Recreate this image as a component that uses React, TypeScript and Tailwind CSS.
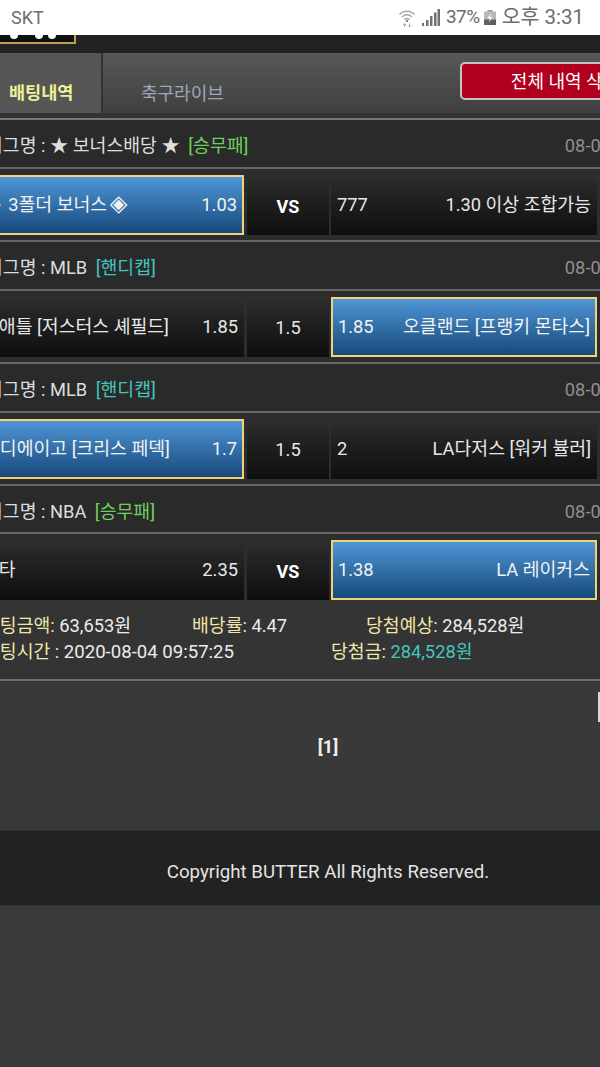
import type { ReactNode } from "react";

const FONT = "font-['Roboto','Noto_Sans_CJK_KR','Noto_Sans',sans-serif]";

function Wifi() {
  return (
    <svg width="18" height="20" viewBox="0 0 18 20" fill="none" stroke="#a8a8a8">
      <path d="M1.5 6.5C5.5 2 12.500 2 16.500 6.500" strokeWidth="1.500" />
      <path d="M4 9C6.800 6 11.200 6 14 9" strokeWidth="1.500" />
      <path d="M6.500 11.500C8 10 10 10 11.500 11.500" strokeWidth="1.500" />
      <circle cx="9" cy="13" r="1.200" fill="#8a8a8a" stroke="none" />
      <path d="M6.500 19V15.500M5 17l1.500-1.500L8 17M11.500 15.500V19M10 17.500l1.500 1.500 1.500-1.500" strokeWidth="1" />
    </svg>
  );
}
function Signal() {
  return (
    <svg width="18" height="17" viewBox="0 0 18 17" fill="#707070">
      <rect x="0" y="14" width="2" height="3" />
      <rect x="4" y="11" width="2.500" height="6" />
      <rect x="8" y="7" width="2.500" height="10" />
      <rect x="12" y="3.500" width="2.500" height="13.500" />
      <rect x="15.500" y="0" width="2.500" height="17" />
    </svg>
  );
}
function Battery() {
  return (
    <svg width="12" height="15" viewBox="0 0 12 15">
      <rect x="3.500" y="0" width="5" height="2" fill="#9a9a9a" />
      <rect x="0" y="1.500" width="12" height="13.500" fill="#b8b8b8" />
      <rect x="0" y="9.500" width="12" height="5.500" fill="#606060" />
      <path d="M7 3L3.500 8.500H6L5 12.500L8.500 7H6Z" fill="#ffffff" />
    </svg>
  );
}

function Cell({
  left,
  right,
  active,
  w,
}: {
  left: ReactNode;
  right: ReactNode;
  active?: boolean;
  w: string;
}) {
  return (
    <div
      className={`${w} h-[60px] shrink-0 flex items-center justify-between text-[18.300px] whitespace-nowrap ${
        active
          ? "pl-[5px] pr-[5px] border-2 border-[#f0d27a] bg-gradient-to-b from-[#4f96d6] to-[#174a7c] text-[#f2f2f2]"
          : "px-[6px] bg-gradient-to-b from-[#2e2e2e] to-[#0e0e0e] text-[#e8e8e8]"
      }`}
    >
      <span>{left}</span>
      <span>{right}</span>
    </div>
  );
}

function Match({
  aName,
  aOdd,
  aActive,
  mid,
  bOdd,
  bName,
  bActive,
  last,
}: {
  aName: ReactNode;
  aOdd: string;
  aActive?: boolean;
  mid: string;
  bOdd: string;
  bName: string;
  bActive?: boolean;
  last?: boolean;
}) {
  return (
    <div className={`flex gap-[2px] pt-[6px] pb-[5px] bg-[#2d2d2d] ${last ? "" : "border-b-2 border-[#666666]"}`}>
      <Cell w="w-[268px] mr-[1px]" left={aName} right={aOdd} active={aActive} />
      <div
        className={`w-[82px] h-[60px] shrink-0 flex items-center justify-center bg-gradient-to-b from-[#2e2e2e] to-[#0e0e0e] ${
          mid === "VS" ? "text-[18px] font-bold text-white" : "text-[18.300px] text-[#e8e8e8]"
        }`}
      >
        <span className="pt-[2px]">{mid}</span>
      </div>
      <Cell w="w-[266px]" left={bOdd} right={bName} active={bActive} />
    </div>
  );
}

function League({ name, tag, tagClass, h }: { name: string; tag: string; tagClass: string; h: string }) {
  return (
    <div className={`${h} flex items-center justify-between pl-[10px] pt-[5px] text-[18.300px] bg-[#2a2a2a] border-b-2 border-[#666666] box-content whitespace-nowrap`}>
      <div className="text-[#dedede]">
        {name} <span className={`ml-[4px] ${tagClass}`}>{tag}</span>
      </div>
      <span className="text-[#8f8f8f]">08-04</span>
    </div>
  );
}

export default function App() {
  return (
    <div className={`${FONT} w-[600px] h-[1067px] overflow-hidden bg-[#3a3a3a] relative`}>
      {/* status bar */}
      <div className="h-[35px] bg-white flex items-center justify-between pl-[11px] pr-[16px] text-[18px] text-[#6c6c6c]">
        <span>SKT</span>
        <div className="flex items-center">
          <Wifi />
          <span className="ml-[6px]"><Signal /></span>
          <span className="ml-[6px] text-[19px] tracking-[-0.5px]">37%</span>
          <span className="ml-[4px]"><Battery /></span>
          <span className="ml-[6px] text-[20.500px]">오후 3:31</span>
        </div>
      </div>

      {/* logo band */}
      <div className="h-[18px] bg-[#222222]">
        <div className="w-[76px] h-[9px] bg-[#111111] border-b-2 border-r-2 border-[#c0a050] flex items-start pl-[10px]">
          <span className="w-[8px] h-[4px] bg-white rounded-b-full" />
          <span className="ml-[17px] w-[8px] h-[4px] bg-white rounded-b-full" />
          <span className="ml-[5px] w-[8px] h-[4px] bg-white rounded-b-full" />
        </div>
      </div>

      {/* tabs */}
      <div className="w-[670px] h-[65px] flex bg-[#333333] pb-[5px] box-border">
        <div className="w-[103px] shrink-0 bg-[#565656] border-r-2 border-[#333333] flex items-end pl-[9px] pb-[7px] text-[17.500px] font-bold text-[#eef09a]">
          배팅내역
        </div>
        <div className="flex-1 flex justify-between bg-gradient-to-b from-[#585858] to-[#404040]">
          <span className="mt-[27px] ml-[38px] text-[18px] text-[#9aa9bd]">축구라이브</span>
          <div className="mt-[9px] w-[210px] h-[38px] border-2 border-[#c4c4c4] rounded-[5px] bg-[#b0001e] text-white text-[18px] flex items-center justify-center">
            전체 내역 삭제
          </div>
        </div>
      </div>
      <div className="h-[2px] bg-[#777777]" />

      {/* bets */}
      <div className="w-[635px] -ml-[24px]">
        <League h="h-[42px]" name="리그명 : ★ 보너스배당 ★" tag="[승무패]" tagClass="text-[#6fcf5f]" />
        <Match
          aName={
            <>
              <span className="font-['DejaVu_Sans'] text-[23px] leading-none">◈</span>
              <span className="ml-[3px]"> 3폴더 보너스 </span>
              <span className="-ml-[2px] font-['DejaVu_Sans'] text-[23px] leading-none">◈</span>
            </>
          }
          aOdd="1.03"
          aActive
          mid="VS"
          bOdd="777"
          bName="1.30 이상 조합가능"
        />
        <League h="h-[42px]" name="리그명 : MLB" tag="[핸디캡]" tagClass="text-[#45c4bd]" />
        <Match aName="시애틀 [저스터스 셰필드]" aOdd="1.85" mid="1.5" bOdd="1.85" bName="오클랜드 [프랭키 몬타스]" bActive />
        <League h="h-[42px]" name="리그명 : MLB" tag="[핸디캡]" tagClass="text-[#45c4bd]" />
        <Match aName="샌디에이고 [크리스 페덱]" aOdd="1.7" aActive mid="1.5" bOdd="2" bName="LA다저스 [워커 뷸러]" />
        <League h="h-[41px]" name="리그명 : NBA" tag="[승무패]" tagClass="text-[#6fcf5f]" />
        <Match aName="유타" aOdd="2.35" mid="VS" bOdd="1.38" bName="LA 레이커스" bActive last />
      </div>

      {/* summary */}
      <div className="h-[66px] -ml-[17px] w-[617px] border-b-2 border-[#6e6e6e] box-content pt-[13px] -mt-[5px] text-[18.300px] bg-[#343434] leading-[26px] whitespace-nowrap">
        <div className="flex">
          <div className="w-[209px]"><span className="text-[#efe6a8]">배팅금액:</span> <span className="text-[#ececec]">63,653원</span></div>
          <div className="w-[174px]"><span className="text-[#efe6a8]">배당률:</span> <span className="text-[#ececec]">4.47</span></div>
          <div><span className="text-[#efe6a8]">당첨예상:</span> <span className="text-[#ececec]">284,528원</span></div>
        </div>
        <div className="flex">
          <div className="w-[348px]"><span className="text-[#efe6a8]">배팅시간 :</span> <span className="text-[18.600px] text-[#ececec]">2020-08-04 09:57:25</span></div>
          <div><span className="text-[#efe6a8]">당첨금:</span> <span className="text-[#45c4bd]">284,528원</span></div>
        </div>
      </div>

      {/* pager */}
      <div className="h-[149px] flex items-center justify-center pl-[56px] pb-[18px] text-[18px] font-bold text-[#f0f0f0] bg-[#393939]">
        [1]
      </div>

      {/* footer */}
      <div className="h-[76px] bg-[#222222] border-t border-b border-[#26303c] flex items-center justify-center pl-[56px] pt-[9px] text-[18.700px] text-[#e4e4e4]">
        Copyright BUTTER All Rights Reserved.
      </div>

      <div className="absolute right-0 top-[692px] w-[2px] h-[30px] bg-[#d8d8d8]" />
    </div>
  );
}
